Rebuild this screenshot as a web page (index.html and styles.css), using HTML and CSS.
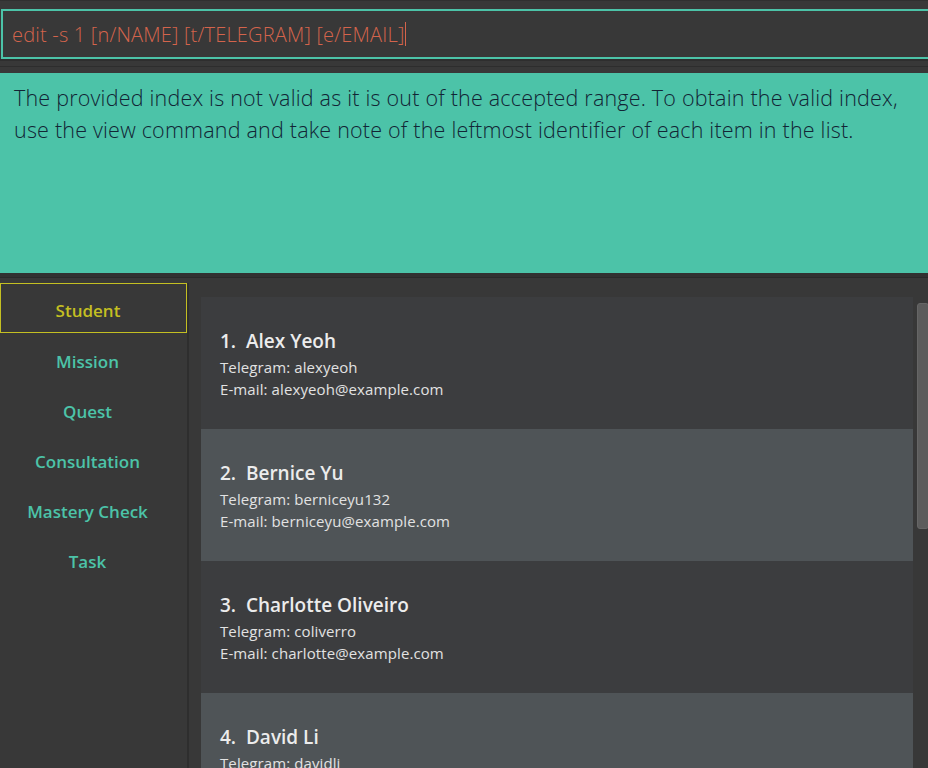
FILE: index.html
```html
<!DOCTYPE html>
<html>
<head>
<meta charset="utf-8">
<link rel="stylesheet" href="styles.css">
</head>
<body>
<div class="app">
  <div class="cmd-area">
    <div class="cmd-box"><span class="cmd-text">edit -s 1 [n/NAME] [t/TELEGRAM] [e/EMAIL]</span><span class="caret"></span></div>
  </div>
  <div class="sep"></div>
  <div class="result">The provided index is not valid as it is out of the accepted range. To obtain the valid index, use the view command and take note of the leftmost identifier of each item in the list.</div>
  <div class="sep2"></div>
  <div class="main">
    <nav class="sidebar">
      <div class="tab active">Student</div>
      <div class="tab">Mission</div>
      <div class="tab">Quest</div>
      <div class="tab">Consultation</div>
      <div class="tab">Mastery Check</div>
      <div class="tab">Task</div>
    </nav>
    <div class="list-area">
      <div class="cards">
        <div class="card">
          <div class="name">1.&nbsp; Alex Yeoh</div>
          <div class="field">Telegram: alexyeoh</div>
          <div class="field">E-mail: alexyeoh@example.com</div>
        </div>
        <div class="card alt">
          <div class="name">2.&nbsp; Bernice Yu</div>
          <div class="field">Telegram: berniceyu132</div>
          <div class="field">E-mail: berniceyu@example.com</div>
        </div>
        <div class="card">
          <div class="name">3.&nbsp; Charlotte Oliveiro</div>
          <div class="field">Telegram: coliverro</div>
          <div class="field">E-mail: charlotte@example.com</div>
        </div>
        <div class="card alt">
          <div class="name">4.&nbsp; David Li</div>
          <div class="field">Telegram: davidli</div>
          <div class="field">E-mail: lidavid@example.com</div>
        </div>
      </div>
      <div class="scroll-track"><div class="scroll-thumb"></div></div>
    </div>
  </div>
</div>
</body>
</html>
```
FILE: styles.css
```css
html, body {
  margin: 0;
  padding: 0;
  background: #383838;
  overflow: hidden;
}
.app {
  width: 928px;
  height: 768px;
  display: flex;
  flex-direction: column;
  font-family: "Open Sans", "Noto Sans", sans-serif;
  overflow: hidden;
}
.cmd-area {
  padding-top: 8px;
  border-top: 2px solid #303030;
  margin-top: -1px;
}
.cmd-box {
  margin-left: 1px;
  margin-right: -4px;
  height: 46px;
  border: 2px solid #4cc3a8;
  background: #383838;
  display: flex;
  align-items: center;
  padding-left: 9px;
}
.cmd-text {
  color: #d4644c;
  font-weight: 300;
  font-size: 20px;
  letter-spacing: 0.2px;
  white-space: pre;
}
.caret {
  display: inline-block;
  width: 1px;
  height: 24px;
  background: #d4644c;
  margin-left: 1px;
}
.sep {
  height: 14px;
  border-top: 2px solid #2e2e2e;
  box-sizing: border-box;
  background: linear-gradient(#383838 0 5px, #2d2d2d 5px 6px, #383838 6px);
}
.result {
  height: 200px;
  box-sizing: border-box;
  background: #4cc3a8;
  color: #122535;
  font-weight: 300;
  font-size: 21.5px;
  line-height: 32px;
  padding: 9px 20px 0 14px;
  letter-spacing: 0.2px;
}
.sep2 {
  height: 10px;
  background: linear-gradient(#313131 0 4px, #2a2a2a 4px 5px, #383838 5px);
}
.main {
  flex: 1;
  display: flex;
  min-height: 0;
}
.sidebar {
  width: 187px;
  flex: none;
  border-right: 2px solid #2e2e2e;
  display: flex;
  flex-direction: column;
}
.tab {
  height: 50px;
  box-sizing: border-box;
  display: flex;
  align-items: center;
  justify-content: center;
  padding: 6px 12px 0 0;
  color: #4cc3a8;
  font-weight: 600;
  font-size: 17px;
}
.tab.active {
  color: #c4bf22;
  border: 1px solid #c4bf22;
  padding: 5px 11px 0 0;
}
.list-area {
  flex: 1;
  display: flex;
  padding: 14px 0 0 12px;
  min-width: 0;
  overflow: hidden;
}
.cards {
  width: 712px;
  flex: none;
  display: flex;
  flex-direction: column;
}
.card {
  height: 132px;
  flex: none;
  box-sizing: border-box;
  background: #3c3d3f;
  padding: 30px 0 0 19px;
  color: #ececec;
}
.card.alt {
  background: #4f5457;
}
.name {
  font-weight: 600;
  font-size: 19px;
  line-height: 28px;
  margin-bottom: 1px;
}
.field {
  font-size: 15px;
  line-height: 22px;
  color: #e2e2e2;
  letter-spacing: 0.1px;
}
.scroll-track {
  flex: 1;
  padding: 6px 0 0 4px;
}
.scroll-thumb {
  width: 12px;
  height: 226px;
  box-sizing: border-box;
  background: #5c5c5c;
  border: 1px solid #666;
  border-radius: 3px;
}
```
